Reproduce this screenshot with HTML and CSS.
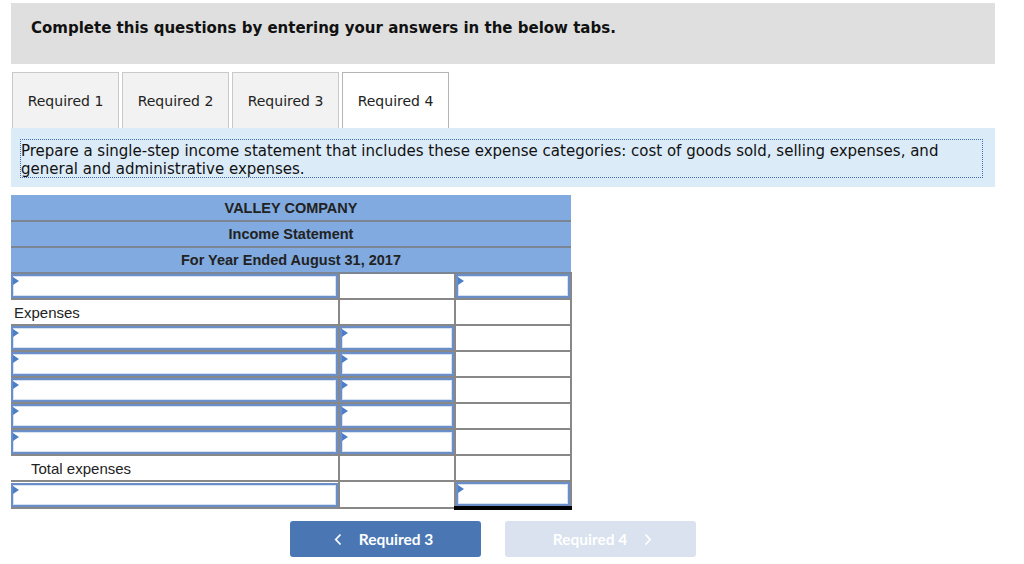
FILE: index.html
```html
<!DOCTYPE html>
<html lang="en">
<head>
    <meta charset="UTF-8">
    <title>Required 4 - Income Statement</title>
    <link rel="stylesheet" href="styles.css">
</head>
<body>
    <div class="page">
        <div class="intro">
            <h1>Complete this questions by entering your answers in the below tabs.</h1>
        </div>

        <div class="tabs">
            <div class="tab">Required 1</div>
            <div class="tab">Required 2</div>
            <div class="tab">Required 3</div>
            <div class="tab active">Required 4</div>
        </div>

        <div class="prompt">
            <p>Prepare a single-step income statement that includes these expense categories: cost of goods sold, selling expenses, and general and administrative expenses.</p>
        </div>

        <table class="statement">
            <colgroup>
                <col class="c-label">
                <col class="c-amt">
                <col class="c-amt">
            </colgroup>
            <thead>
                <tr><th colspan="3">VALLEY COMPANY</th></tr>
                <tr><th colspan="3">Income Statement</th></tr>
                <tr><th colspan="3">For Year Ended August 31, 2017</th></tr>
            </thead>
            <tbody>
                <tr>
                    <td class="entry"><div class="field"></div></td>
                    <td></td>
                    <td class="entry"><div class="field"></div></td>
                </tr>
                <tr>
                    <td class="label">Expenses</td>
                    <td></td>
                    <td></td>
                </tr>
                <tr>
                    <td class="entry"><div class="field"></div></td>
                    <td class="entry"><div class="field"></div></td>
                    <td></td>
                </tr>
                <tr>
                    <td class="entry"><div class="field"></div></td>
                    <td class="entry"><div class="field"></div></td>
                    <td></td>
                </tr>
                <tr>
                    <td class="entry"><div class="field"></div></td>
                    <td class="entry"><div class="field"></div></td>
                    <td></td>
                </tr>
                <tr>
                    <td class="entry"><div class="field"></div></td>
                    <td class="entry"><div class="field"></div></td>
                    <td></td>
                </tr>
                <tr>
                    <td class="entry"><div class="field"></div></td>
                    <td class="entry"><div class="field"></div></td>
                    <td></td>
                </tr>
                <tr>
                    <td class="label indent">Total expenses</td>
                    <td class="sum-top"></td>
                    <td></td>
                </tr>
                <tr>
                    <td class="entry"><div class="field"></div></td>
                    <td></td>
                    <td class="entry sum-top grand"><div class="field"></div></td>
                </tr>
            </tbody>
        </table>

        <div class="nav">
            <button class="nav-btn prev">
                <svg class="chev" width="8" height="13" viewBox="0 0 8 13"><path d="M6.5 1.5 L1.8 6.5 L6.5 11.5" fill="none" stroke="currentColor" stroke-width="1.8"/></svg>
                Required 3
            </button>
            <button class="nav-btn next" disabled>
                Required 4
                <svg class="chev" width="8" height="13" viewBox="0 0 8 13"><path d="M1.5 1.5 L6.2 6.5 L1.5 11.5" fill="none" stroke="currentColor" stroke-width="1.8"/></svg>
            </button>
        </div>
    </div>
</body>
</html>
```

FILE: styles.css
```css
* {
    box-sizing: border-box;
    margin: 0;
    padding: 0;
}

body {
    font-family: 'DejaVu Sans', Verdana, sans-serif;
    background: #fff;
    color: #111;
}

.page {
    width: 984px;
    margin: 3px 0 0 11px;
}

.intro {
    background: #dfdfdf;
    height: 61px;
    padding: 16px 20px 0;
}

.intro h1 {
    font-size: 15px;
    font-weight: bold;
    line-height: 18px;
}

.tabs {
    display: flex;
    gap: 3px;
    margin-top: 8px;
    padding-left: 1px;
}

.tab {
    width: 107px;
    height: 56px;
    background: #f2f2f2;
    border: 1px solid #c9c9c9;
    border-bottom: none;
    font-size: 14px;
    line-height: 56px;
    text-align: center;
    color: #222;
}

.tab.active {
    background: #fff;
    border-color: #b5b5b5;
}

.prompt {
    background: #dcebf8;
    height: 59px;
    padding: 11px 12px 0 9px;
}

.prompt p {
    border: 1px dotted #3f6fb8;
    font-size: 15px;
    line-height: 18px;
    padding: 2px 0 0 0;
    height: 39px;
}

.statement {
    margin-top: 8px;
    width: 560px;
    border-collapse: collapse;
    table-layout: fixed;
    font-family: 'Liberation Sans', Arial, sans-serif;
    font-size: 15px;
}

.c-label { width: 328px; }
.c-amt { width: 116px; }

.statement th {
    background: #80aae0;
    height: 26px;
    font-weight: bold;
    font-size: 14.5px;
    color: #222;
    border-bottom: 2px solid #7b8594;
    text-align: center;
}

.statement td {
    height: 26px;
    border: 2px solid #888;
    border-top: none;
    padding: 0;
    color: #222;
}

.statement td:first-child {
    border-left: none;
}

.statement td.label {
    padding-left: 3px;
    border-right: 2px solid #888;
}

.statement td.indent {
    padding-left: 20px;
}

.field {
    position: relative;
    height: 24px;
    border: 2px solid #6a8fc8;
    box-shadow: inset 0 0 0 1px #d6e2f3;
    background: #fff;
}

.field::before {
    content: '';
    position: absolute;
    top: 1px;
    left: 0;
    border-top: 4px solid transparent;
    border-bottom: 4px solid transparent;
    border-left: 6px solid #4d7fc6;
}

.statement td.sum-top {
    border-top: 2px solid #111;
}

.statement td.grand {
    border-bottom: 4px solid #000;
}

.nav {
    display: flex;
    gap: 24px;
    margin-top: 11px;
    padding-left: 279px;
}

.nav-btn {
    display: flex;
    align-items: center;
    justify-content: center;
    gap: 17px;
    width: 191px;
    height: 36px;
    border: none;
    border-radius: 3px;
    font-family: 'Lato', 'Liberation Sans', sans-serif;
    font-size: 15.5px;
    font-weight: bold;
    color: #fff;
}

.nav-btn.prev {
    background: #4a77b4;
    padding-right: 4px;
}

.nav-btn.next {
    background: #d9e2ee;
    padding-left: 4px;
}
```
